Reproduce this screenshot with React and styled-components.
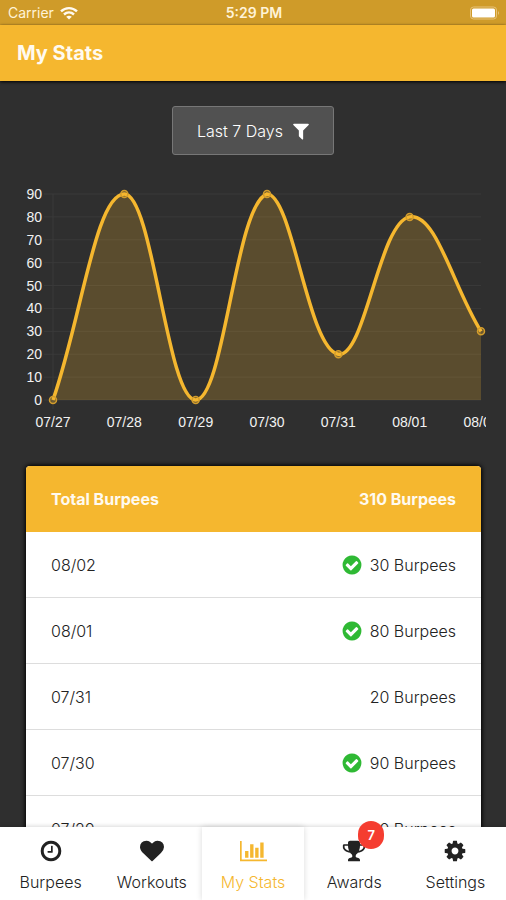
import React, { useState } from "react";
import styled, { createGlobalStyle } from "styled-components";

const GlobalStyle = createGlobalStyle`
  * {
    box-sizing: border-box;
  }

  body {
    margin: 0;
    background: #2f2f2f;
    font-family: Inter, "Liberation Sans", sans-serif;
  }
`;

const Screen = styled.div`
  display: flex;
  flex-direction: column;
  height: 100vh;
`;

const StatusBar = styled.div`
  display: grid;
  grid-template-columns: 1fr auto 1fr;
  align-items: center;
  flex: none;
  height: 25px;
  padding: 0 6px 0 8px;
  background: #cf9b29;
  color: #fff3d8;
  font-size: 14px;
`;

const Carrier = styled.span`
  display: flex;
  align-items: center;
  gap: 6px;
`;

const Time = styled.span`
  font-weight: 600;
`;

const Battery = styled.svg`
  justify-self: end;
`;

const Header = styled.header`
  display: flex;
  align-items: center;
  flex: none;
  height: 56px;
  padding: 0 17px;
  background: #f5b72f;
  box-shadow: 0 1px 3px #000;
  z-index: 1;
`;

const Title = styled.h1`
  margin: 0;
  color: #fffaf0;
  font-size: 20px;
  font-weight: 700;
`;

const Content = styled.main`
  flex: 1;
  min-height: 0;
  padding: 25px 0;
  overflow-y: auto;
  scrollbar-width: none;
`;

const FilterButton = styled.button`
  display: flex;
  align-items: center;
  gap: 8px;
  height: 49px;
  margin: 0 auto;
  padding: 0 22px 0 24px;
  border: 1px solid #777;
  border-radius: 3px;
  background: #515151;
  color: #fff;
  font-family: inherit;
  font-size: 16px;
  font-weight: 300;
  cursor: pointer;
`;

const Chart = styled.svg`
  display: block;
  width: calc(100% - 40px);
  margin: 29px 20px 32px;
  overflow: hidden;
`;

const ChartLabel = styled.text`
  fill: #f2f2f2;
  font-family: "Liberation Sans", Arial, sans-serif;
  font-size: 14px;
`;

const Card = styled.div`
  margin: 0 25px 0 26px;
  border-radius: 4px;
  background: #fff;
  box-shadow: 0 0 4px 1px #000;
  overflow: hidden;
`;

const Table = styled.table`
  width: 100%;
  border-collapse: separate;
  border-spacing: 0;
  font-size: 16px;
`;

const HeadCell = styled.th`
  height: 66px;
  padding: 0 25px;
  background: #f5b72f;
  color: #fffaf0;
  font-weight: 700;
  text-align: ${(props) => props.$align || "left"};
`;

const Cell = styled.td`
  height: 66px;
  padding: 0 25px;
  border-bottom: 1px solid #ddd;
  color: #222;
  font-weight: 300;
`;

const Amount = styled.div`
  display: flex;
  align-items: center;
  justify-content: flex-end;
  gap: 7px;
`;

const TabBar = styled.nav`
  display: flex;
  flex: none;
  height: 73px;
  background: #fff;
  box-shadow: 0 -1px 4px rgba(0, 0, 0, 0.15);
  z-index: 1;
`;

const Tab = styled.a`
  display: flex;
  flex: 1 1 0;
  flex-direction: column;
  align-items: center;
  gap: 9px;
  padding-top: 12px;
  color: ${(props) => (props.$active ? "#f5b72f" : "#222")};
  box-shadow: ${(props) =>
    props.$active ? "0 0 6px rgba(0, 0, 0, 0.15)" : "none"};
  font-size: 16px;
  font-weight: 300;
  line-height: 20px;
  text-decoration: none;
`;

const TabIcon = styled.span`
  position: relative;
  display: flex;
`;

const Badge = styled.span`
  position: absolute;
  top: -18px;
  left: 16px;
  width: 26px;
  height: 28px;
  border-radius: 13px;
  background: #f53d30;
  color: #fff;
  font-size: 13px;
  font-weight: 600;
  line-height: 28px;
  text-align: center;
`;

const icons = {
  clock:
    "M1024 544v448q0 14-9 23t-23 9h-320q-14 0-23-9t-9-23v-64q0-14 9-23t23-9h224v-352q0-14 9-23t23-9h64q14 0 23 9t9 23zm416 352q0-148-73-273t-198-198-273-73-273 73-198 198-73 273 73 273 198 198 273 73 273-73 198-198 73-273zm224 0q0 209-103 385.5t-279.5 279.5-385.5 103-385.5-103-279.5-279.5-103-385.5 103-385.5 279.5-279.5 385.5-103 385.5 103 279.5 279.5 103 385.5z",
  heart:
    "M896 1664q-26 0-44-18l-624-602q-10-8-27.5-26t-55.5-65.5-68-97.5-53.5-121-23.5-138q0-220 127-344t351-124q62 0 126.5 21.5t120 58 95.5 68.5 76 68q36-36 76-68t95.5-68.5 120-58 126.5-21.5q224 0 351 124t127 344q0 221-229 450l-623 600q-18 18-44 18z",
  chart:
    "M640 896v512h-256v-512h256zm384-512v1024h-256v-1024h256zm1024 1152v128h-2048v-1536h128v1408h1920zm-640-896v768h-256v-768h256zm384-384v1152h-256v-1152h256z",
  trophy:
    "M522 883q-74-162-74-371h-256v96q0 78 94.5 162t235.5 113zm1078-275v-96h-256q0 209-74 371 141-29 235.5-113t94.5-162zm128-128v128q0 71-41.5 143t-112 130-173 97.5-215.5 44.5q-42 54-95 95-38 34-52.5 72.5t-14.5 89.5q0 54 30.5 91t97.5 37q75 0 133.5 45.5t58.5 114.5v64q0 14-9 23t-23 9h-832q-14 0-23-9t-9-23v-64q0-69 58.5-114.5t133.5-45.5q67 0 97.5-37t30.5-91q0-51-14.5-89.5t-52.5-72.5q-53-41-95-95-113-5-215.5-44.5t-173-97.5-112-130-41.5-143v-128q0-40 28-68t68-28h288v-96q0-66 47-113t113-47h576q66 0 113 47t47 113v96h288q40 0 68 28t28 68z",
  cog: "M1152 896q0-106-75-181t-181-75-181 75-75 181 75 181 181 75 181-75 75-181zm512-109v222q0 12-8 23t-20 13l-185 28q-19 54-39 91 35 50 107 138 10 12 10 25t-9 23q-27 37-99 108t-94 71q-12 0-26-9l-138-108q-44 23-91 38-16 136-29 186-7 28-36 28h-222q-14 0-24.5-8.5t-11.5-21.5l-28-184q-49-16-90-37l-141 107q-10 9-25 9-14 0-25-11-126-114-165-168-7-10-7-23 0-12 8-23 15-21 51-66.5t54-70.5q-27-50-41-99l-183-27q-13-2-21-12.5t-8-23.5v-222q0-12 8-23t19-13l186-28q14-46 39-92-40-57-107-138-10-12-10-24 0-10 9-23 26-36 98.5-107.5t94.5-71.5q13 0 26 10l138 107q44-23 91-38 16-136 29-186 7-28 36-28h222q14 0 24.5 8.5t11.5 21.5l28 184q49 16 90 37l142-107q9-9 24-9 13 0 25 10 129 119 165 170 7 8 7 22 0 12-8 23-15 21-51 66.5t-54 70.5q26 50 41 98l183 28q13 2 21 12.5t8 23.5z",
  check:
    "M1412 734q0-28-18-46l-91-90q-19-19-45-19t-45 19l-408 407-226-226q-19-19-45-19t-45 19l-91 90q-18 18-18 46 0 27 18 45l362 362q19 19 45 19 27 0 46-19l543-543q18-18 18-45zm252 162q0 209-103 385.5t-279.5 279.5-385.5 103-385.5-103-279.5-279.5-103-385.5 103-385.5 279.5-279.5 385.5-103 385.5 103 279.5 279.5 103 385.5z",
  filter:
    "M1595 295q17 41-14 70l-493 493v742q0 42-39 59-13 5-25 5-27 0-45-19l-256-256q-19-19-19-45v-486l-493-493q-31-29-14-70 17-39 59-39h1280q42 0 59 39z",
};

function Icon({ name, size = 24, color = "currentColor" }) {
  const boxWidth = name === "chart" ? 2048 : 1792;
  return (
    <svg
      width={Math.round((size * boxWidth) / 1792)}
      height={size}
      viewBox={`0 0 ${boxWidth} 1792`}
      fill={color}
      aria-hidden="true"
    >
      <path d={icons[name]} />
    </svg>
  );
}

const days = [
  { date: "07/27", burpees: 0 },
  { date: "07/28", burpees: 90 },
  { date: "07/29", burpees: 0 },
  { date: "07/30", burpees: 90 },
  { date: "07/31", burpees: 20 },
  { date: "08/01", burpees: 80 },
  { date: "08/02", burpees: 30 },
];

const GOAL = 30;

const tabs = [
  { label: "Burpees", icon: "clock" },
  { label: "Workouts", icon: "heart" },
  { label: "My Stats", icon: "chart" },
  { label: "Awards", icon: "trophy", badge: 7 },
  { label: "Settings", icon: "cog" },
];

// plot area inside the 466x250 chart
const area = { left: 33, right: 461, top: 10, bottom: 216 };
const ticks = [0, 10, 20, 30, 40, 50, 60, 70, 80, 90];

const xAt = (i) =>
  area.left + ((area.right - area.left) * i) / (days.length - 1);
const yAt = (value) => area.bottom - ((area.bottom - area.top) * value) / 90;

const clampY = (y) => Math.min(area.bottom, Math.max(area.top, y));

// control points before and after a point, kept inside the plot area
const controls = (points, i) => {
  const p = points[i];
  const prev = points[i - 1] || p;
  const next = points[i + 1] || p;
  const d01 = Math.hypot(p.x - prev.x, p.y - prev.y);
  const d12 = Math.hypot(next.x - p.x, next.y - p.y);
  const a = (0.4 * d01) / (d01 + d12);
  const b = (0.4 * d12) / (d01 + d12);
  const dx = next.x - prev.x;
  const dy = next.y - prev.y;
  return {
    before: [p.x - a * dx, clampY(p.y - a * dy)],
    after: [p.x + b * dx, clampY(p.y + b * dy)],
  };
};

function StatsChart() {
  const points = days.map((day, i) => ({ x: xAt(i), y: yAt(day.burpees) }));
  const line = points
    .map((p, i) => {
      if (i === 0) return `M${p.x} ${p.y}`;
      const from = controls(points, i - 1).after;
      const to = controls(points, i).before;
      return `C${from.join(" ")} ${to.join(" ")} ${p.x} ${p.y}`;
    })
    .join(" ");

  return (
    <Chart viewBox="0 0 466 250" role="img" aria-label="Burpees per day">
      {ticks.map((tick) => (
        <g key={tick}>
          <line
            x1={area.left - 9}
            x2={area.right}
            y1={yAt(tick)}
            y2={yAt(tick)}
            stroke="#3a3a3a"
          />
          <ChartLabel x={22} y={yAt(tick) + 5} textAnchor="end">
            {tick}
          </ChartLabel>
        </g>
      ))}
      <line
        x1={area.left}
        x2={area.left}
        y1={area.top}
        y2={area.bottom + 9}
        stroke="#3a3a3a"
      />
      <path
        d={`${line} V${area.bottom} H${area.left} Z`}
        fill="#f5b72f"
        fillOpacity="0.22"
      />
      <path d={line} fill="none" stroke="#f5b72f" strokeWidth="3.5" />
      {points.map((p, i) => (
        <g key={days[i].date}>
          <circle
            cx={p.x}
            cy={p.y}
            r="3.5"
            fill="#f5b72f"
            fillOpacity="0.3"
            stroke="#d39d2c"
            strokeWidth="1.5"
          />
          <ChartLabel x={p.x} y={area.bottom + 27} textAnchor="middle">
            {days[i].date}
          </ChartLabel>
        </g>
      ))}
    </Chart>
  );
}

function StatsTable() {
  const total = days.reduce((sum, day) => sum + day.burpees, 0);

  return (
    <Card>
      <Table>
        <thead>
          <tr>
            <HeadCell>Total Burpees</HeadCell>
            <HeadCell $align="right">{total} Burpees</HeadCell>
          </tr>
        </thead>
        <tbody>
          {[...days].reverse().map((day) => (
            <tr key={day.date}>
              <Cell>{day.date}</Cell>
              <Cell>
                <Amount>
                  {day.burpees >= GOAL && (
                    <Icon name="check" size={22} color="#2fb934" />
                  )}
                  {day.burpees} Burpees
                </Amount>
              </Cell>
            </tr>
          ))}
        </tbody>
      </Table>
    </Card>
  );
}

export default function App() {
  const [activeTab, setActiveTab] = useState("My Stats");

  const handleTab = (e, label) => {
    e.preventDefault();
    setActiveTab(label);
  };

  return (
    <Screen>
      <GlobalStyle />
      <StatusBar>
        <Carrier>
          Carrier
          <svg width="18" height="14" viewBox="0 0 18 14" aria-hidden="true">
            <g fill="none" stroke="#fffaf0" strokeWidth="2.4">
              <path d="M1 5.4C5.6 1 12.4 1 17 5.4" />
              <path d="M4 8.5C6.9 5.8 11.1 5.8 14 8.5" />
            </g>
            <path d="M9 13.6L6.2 10.8Q9 8.6 11.8 10.8Z" fill="#fffaf0" />
          </svg>
        </Carrier>
        <Time>5:29 PM</Time>
        <Battery width="30" height="14" viewBox="0 0 30 14" aria-hidden="true">
          <rect
            x="0.5"
            y="1"
            width="26"
            height="12"
            rx="3"
            fill="none"
            stroke="#e6c27a"
          />
          <rect x="2" y="2.5" width="23" height="9" rx="1.5" fill="#fff" />
          <path d="M28 5Q30 7 28 9Z" fill="#e6c27a" />
        </Battery>
      </StatusBar>
      <Header>
        <Title>My Stats</Title>
      </Header>
      <Content>
        <FilterButton type="button">
          Last 7 Days
          <Icon name="filter" size={20} />
        </FilterButton>
        <StatsChart />
        <StatsTable />
      </Content>
      <TabBar>
        {tabs.map(({ label, icon, badge }) => (
          <Tab
            key={label}
            href="#"
            $active={label === activeTab}
            onClick={(e) => handleTab(e, label)}
          >
            <TabIcon>
              <Icon name={icon} />
              {badge && <Badge>{badge}</Badge>}
            </TabIcon>
            {label}
          </Tab>
        ))}
      </TabBar>
    </Screen>
  );
}
